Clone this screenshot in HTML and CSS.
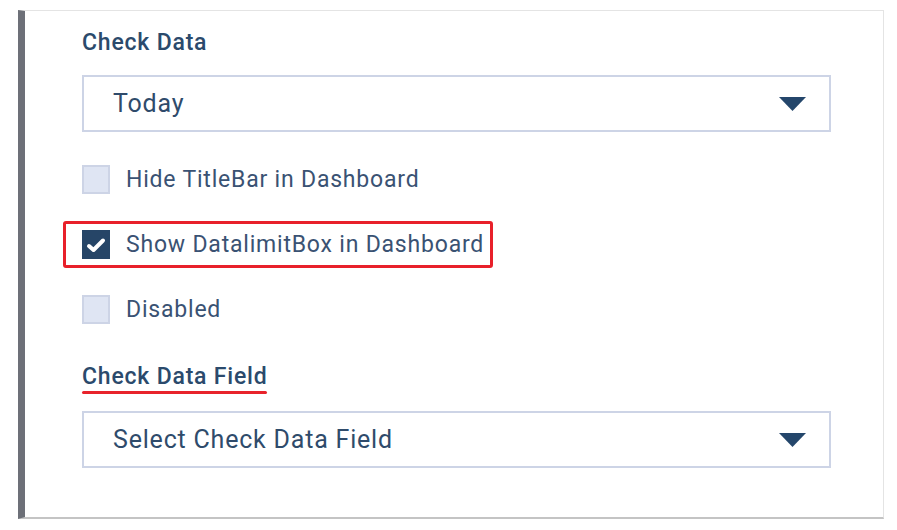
FILE: index.html
```html
<!DOCTYPE html>
<html>
<head>
<meta charset="utf-8">
<link rel="stylesheet" href="styles.css">
</head>
<body>
<div class="page">
  <div class="panel">
    <div class="field-label">Check Data</div>
    <div class="select">
      <span class="select-text">Today</span>
      <svg class="caret" width="27" height="14" viewBox="0 0 27 14"><polygon points="0,0 27,0 13.5,14" fill="#24466b"/></svg>
    </div>
    <div class="checks">
      <label class="check">
        <span class="box"></span>
        <span class="check-text">Hide TitleBar in Dashboard</span>
      </label>
      <label class="check highlighted">
        <span class="box checked">
          <svg width="20" height="16" viewBox="0 0 20 16"><path d="M3 9 L7.5 13 L17 3.5" fill="none" stroke="#fff" stroke-width="4" stroke-linecap="round" stroke-linejoin="round"/></svg>
        </span>
        <span class="check-text">Show DatalimitBox in Dashboard</span>
      </label>
      <label class="check">
        <span class="box"></span>
        <span class="check-text">Disabled</span>
      </label>
    </div>
    <div class="field-label underlined">Check Data Field</div>
    <div class="select">
      <span class="select-text">Select Check Data Field</span>
      <svg class="caret" width="27" height="14" viewBox="0 0 27 14"><polygon points="0,0 27,0 13.5,14" fill="#24466b"/></svg>
    </div>
  </div>
</div>
</body>
</html>
```
FILE: styles.css
```css
html, body {
  margin: 0;
  padding: 0;
  background: #ffffff;
}
body {
  font-family: Roboto, "Liberation Sans", sans-serif;
  color: #2f4a6a;
}
.page {
  padding: 10px 13px 0 18px;
}
.panel {
  box-sizing: border-box;
  width: 866px;
  height: 509px;
  border-left: 7px solid #6d7078;
  border-top: 1px solid #e4e4e4;
  border-right: 1px solid #e4e4e4;
  border-bottom: 2px solid #c4c4c4;
  padding: 19px 52px 0 57px;
  display: flex;
  flex-direction: column;
}
.field-label {
  font-size: 23px;
  font-weight: 500;
  letter-spacing: 0.8px;
  color: #2b4a6c;
  line-height: 26px;
  align-self: flex-start;
}
.field-label.underlined {
  position: relative;
}
.field-label.underlined::after {
  content: "";
  position: absolute;
  left: 0;
  right: 1px;
  bottom: -4px;
  height: 3px;
  border-radius: 2px;
  background: #e8232b;
}
.select {
  box-sizing: border-box;
  margin-top: 19px;
  height: 57px;
  width: 749px;
  border: 2px solid #cdd4e6;
  display: flex;
  align-items: center;
  justify-content: space-between;
  padding: 0 23px 0 29px;
}
.select + .checks {
  margin-top: 33px;
}
.underlined + .select {
  margin-top: 21px;
}
.select-text {
  font-size: 25px;
  letter-spacing: 0.8px;
  color: #2f4b6b;
}
.caret {
  display: block;
}
.checks {
  display: flex;
  flex-direction: column;
  gap: 36px;
  margin-bottom: 40px;
}
.check {
  display: flex;
  align-items: center;
  gap: 16px;
  height: 29px;
  position: relative;
  align-self: flex-start;
}
.check.highlighted::before {
  content: "";
  position: absolute;
  left: -19px;
  top: -9px;
  width: 430px;
  height: 47px;
  box-sizing: border-box;
  border: 3px solid #e8202a;
  border-radius: 3px;
}
.box {
  box-sizing: border-box;
  width: 28px;
  height: 29px;
  background: #dfe5f3;
  border: 2px solid #cdd4e6;
  display: flex;
  align-items: center;
  justify-content: center;
}
.box.checked {
  background: #264567;
  border-color: #264567;
}
.check-text {
  font-size: 23px;
  color: #3a5273;
  letter-spacing: 0.8px;
}
```
